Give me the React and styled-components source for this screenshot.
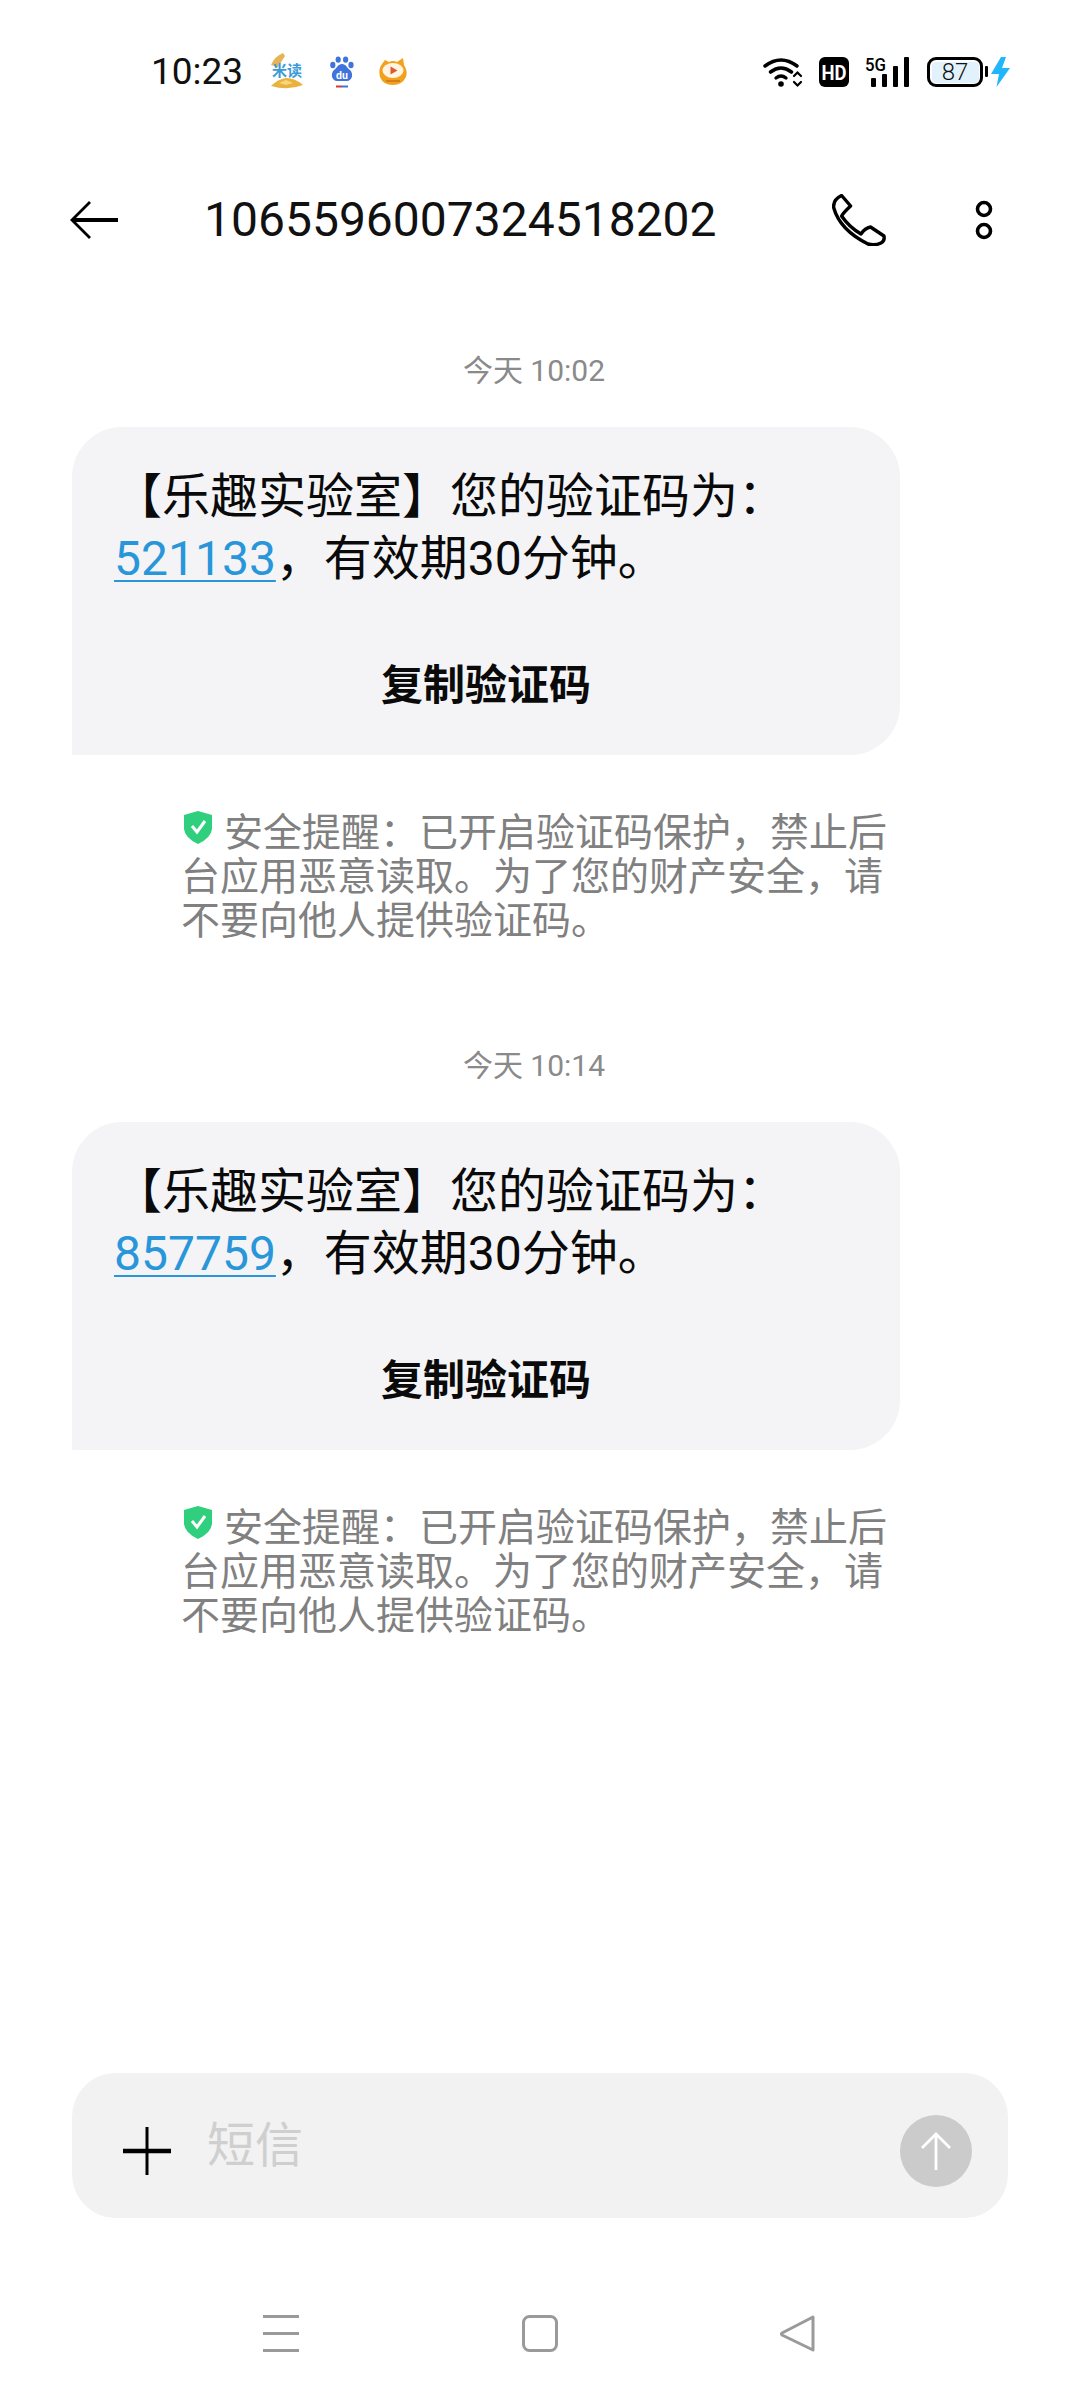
import React from "react";
import styled, { createGlobalStyle } from "styled-components";

const Global = createGlobalStyle`
  html, body { margin: 0; padding: 0; background: #fff; }
  * { box-sizing: border-box; }
`;
const FONT = `Roboto, "Noto Sans CJK SC", sans-serif`;

const Page = styled.div`
  width: 1080px; height: 2400px; display: flex; flex-direction: column;
  background: #fff; font-family: ${FONT}; color: #000; overflow: hidden;
`;
const StatusBar = styled.div`
  height: 144px; flex: none; display: flex; align-items: center; padding: 0 69px 0 151px;
`;
const Time = styled.span`font-size: 37px; line-height: 44px; color: #111; width: 117px;`;
const AppIcons = styled.div`display: flex; align-items: center; gap: 24px;`;
const StatusIcons = styled.div`margin-left: auto; display: flex; align-items: center; gap: 16px;`;
const BatteryWrap = styled.div`display: flex; align-items: center; gap: 8px;`;
const Battery = styled.div`
  width: 56px; height: 30px; border: 3.5px solid #000; border-radius: 9px; padding: 1.5px;
  display: flex; position: relative;
  &::after { content: ""; position: absolute; right: -8px; top: 6px; width: 3.5px; height: 11px; background: #000; border-radius: 1px; }
`;
const BatteryFill = styled.div`
  flex: 1; background: #e2f2fd; border-radius: 4px; font-size: 24px; line-height: 20px;
  text-align: center; color: #111; font-weight: 300;
`;
const Header = styled.div`
  height: 152px; flex: none; display: flex; align-items: center; padding-left: 70px;
`;
const Title = styled.h1`
  margin: 0 0 0 86px; font-size: 48px; line-height: 60px; font-weight: 400; color: #111; width: 628px;
`;
const HeaderDots = styled.svg`margin-left: 89px;`;
const Thread = styled.div`
  flex: 1; padding: 51px 72px 0; display: flex; flex-direction: column; gap: 99px;
`;
const Group = styled.div`display: flex; flex-direction: column;`;
const Stamp = styled.div`
  font-size: 30px; line-height: 48px; color: #8a8a8a; text-align: center; padding-right: 12px;
`;
const Bubble = styled.div`
  margin-top: 32px; width: 828px; height: 328px; background: #f4f4f6;
  border-radius: 50px 50px 50px 2px; padding: 39px 42px 0;
`;
const Body = styled.div`font-size: 48px; line-height: 62px; color: #0a0a0a;`;
const Code = styled.a`color: #2a96da; text-decoration: underline; text-decoration-thickness: 2px; text-underline-offset: 5px;`;
const Copy = styled.div`
  margin-top: 66px; font-size: 42px; line-height: 60px; font-weight: 700; text-align: center; color: #0a0a0a;
`;
const Notice = styled.div`
  margin: 56px 0 0 109px; width: 712px; font-size: 39px; line-height: 44px; color: #808080;
`;
const ShieldIcon = styled.svg`
  display: inline-block; width: 28px; height: 33px; margin: 0 12px 0 3px; vertical-align: 2px;
`;
const Composer = styled.div`
  margin: 1px 72px 0; height: 145px; flex: none; background: #f2f2f2; border-radius: 44px;
  display: flex; align-items: center; padding: 11px 36px 0 51px;
`;
const Placeholder = styled.span`
  margin-left: 36px; font-size: 48px; line-height: 60px; color: #cfcfcf; flex: 1; position: relative; top: -5px;
`;
const SendButton = styled.div`
  width: 72px; height: 72px; border-radius: 50%; background: #cbcbcb; display: flex; align-items: center; justify-content: center;
`;
const NavBar = styled.div`
  height: 182px; flex: none; padding-top: 97px; display: flex; align-items: flex-start;
`;
const NavSlot = styled.div`
  width: 36px; height: 37px; margin-left: ${(p) => p.$gap}px; display: flex;
`;
const GlyphSvg = styled.svg`overflow: visible; flex: none;`;

const MiduIcon = () => (
  <GlyphSvg width="38" height="38" viewBox="0 0 38 38">
    <path d="M3 12 Q7 3 15 0 L17 3 L10 14 Z" fill="#e6b455" />
    <text x="19" y="23" textAnchor="middle" fontSize="15" fontWeight="700" fill="#3c9ad8" fontFamily='"Noto Sans CJK SC", sans-serif'>米读</text>
    <path d="M3 33 Q10 26 18 25 Q27 25 35 32 Q20 38 3 33 Z" fill="#e9b13d" />
    <path d="M11 30 L18 27 L25 30 L18 32 Z" fill="#f6d77c" />
  </GlyphSvg>
);
const BaiduIcon = () => (
  <GlyphSvg width="24" height="32" viewBox="0 0 24 32">
    <g fill="#3f74dc">
      <ellipse cx="2.8" cy="9" rx="2.6" ry="3.2" />
      <ellipse cx="8.2" cy="3.6" rx="2.6" ry="3.2" />
      <ellipse cx="15.6" cy="3.6" rx="2.6" ry="3.2" />
      <ellipse cx="21" cy="9" rx="2.6" ry="3.2" />
      <path d="M12 8 C16 8 17 12 20 14 C24 18 22 25 17 25 C14 25 10 25 7 25 C2 25 0 18 4 14 C7 12 8 8 12 8 Z" />
    </g>
    <text x="12" y="23" textAnchor="middle" fontSize="10.5" fontWeight="700" fill="#fff" fontFamily="Roboto, sans-serif">du</text>
    <rect x="6" y="29.5" width="6" height="2" fill="#cf3b3b" />
    <rect x="12" y="29.5" width="6" height="2" fill="#3f74dc" />
  </GlyphSvg>
);
const TigerIcon = () => (
  <GlyphSvg width="30" height="28" viewBox="0 0 30 28">
    <path d="M4 6 L7 2 L11 4 Q15 2 19 4 L25 0 L26 7 Q30 13 28 19 Q24 27 15 27 Q5 27 2 19 Q0 11 4 6 Z" fill="#f2a11d" />
    <ellipse cx="15" cy="12.5" rx="10.5" ry="7.5" fill="#fff5e2" />
    <path d="M12.5 8.5 L19.5 12.5 L12.5 16.5 Z" fill="#dd5a2c" />
    <path d="M8 23 H22" stroke="#c9741a" strokeWidth="1.5" />
  </GlyphSvg>
);
const WifiIcon = () => (
  <GlyphSvg width="40" height="30" viewBox="0 0 40 30" fill="none" stroke="#000" strokeLinecap="round">
    <path d="M2 9 Q18 -3 34 9" strokeWidth="3.6" />
    <path d="M7.5 15 Q18 7 28.5 15" strokeWidth="3.6" />
    <path d="M13 21 Q18 17 23 21" strokeWidth="3.4" />
    <circle cx="18" cy="27" r="2.8" fill="#000" stroke="none" />
    <path d="M31 19 L34.5 15.5 L38 19" strokeWidth="2.2" />
    <path d="M31 25 L34.5 28.5 L38 25" strokeWidth="2.2" />
  </GlyphSvg>
);
const HdIcon = () => (
  <GlyphSvg width="30" height="30" viewBox="0 0 30 30">
    <rect width="30" height="30" rx="6" fill="#000" />
    <text x="15" y="23" textAnchor="middle" fontSize="21" fontWeight="700" fill="#fff" fontFamily="Roboto, sans-serif" textLength="25" lengthAdjust="spacingAndGlyphs">HD</text>
  </GlyphSvg>
);
const SignalIcon = () => (
  <GlyphSvg width="46" height="30" viewBox="0 0 46 30" fill="#000">
    <text x="0" y="14" fontSize="19" fontWeight="500" fontFamily="Roboto, sans-serif" textLength="21" lengthAdjust="spacingAndGlyphs">5G</text>
    <rect x="6" y="21" width="5" height="9" rx="1" />
    <rect x="17" y="17" width="5" height="13" rx="1" />
    <rect x="28" y="9" width="5" height="21" rx="1" />
    <rect x="39" y="0" width="5" height="30" rx="1" />
  </GlyphSvg>
);
const BoltIcon = () => (
  <GlyphSvg width="20" height="30" viewBox="0 0 20 30">
    <path d="M10 0 L0 17 H8 L5.5 30 L19 11 H11 L15 0 Z" fill="#1fb6fb" />
  </GlyphSvg>
);
const BackIcon = () => (
  <svg width="48" height="38" viewBox="0 0 48 38" fill="none" stroke="#000">
    <path d="M20 1 L2 19 L20 37" strokeWidth="2.8" />
    <path d="M3 19 H48" strokeWidth="4" />
  </svg>
);
const PhoneIcon = () => (
  <svg width="54" height="52" viewBox="0 0 54 52" fill="none" stroke="#000" strokeWidth="3.4" strokeLinejoin="round">
    <path d="M9.6 1.5 L18.6 12 Q12 18 9.6 22 Q17 33 29 40 Q33 34 38.5 33 L52 42 Q53 47 49 49 Q43 52 36 50 Q8 36 1.8 14 Q0.5 6 9.6 1.5 Z" />
  </svg>
);
const DotsIcon = () => (
  <HeaderDots width="18" height="40" viewBox="0 0 18 40" fill="none" stroke="#000" strokeWidth="3.6">
    <circle cx="9" cy="9" r="6.5" />
    <circle cx="9" cy="31" r="6.5" />
  </HeaderDots>
);
const ShieldGlyph = () => (
  <ShieldIcon viewBox="0 0 28 33">
    <path d="M14 0 L28 4 V18 Q27 27 14 33 Q1 27 0 18 V4 Z" fill="#2fcf7d" />
    <path d="M8 15 L13 21 L21 10" fill="none" stroke="#fff" strokeWidth="3" />
  </ShieldIcon>
);
const PlusIcon = () => (
  <svg width="48" height="48" viewBox="0 0 48 48" stroke="#000">
    <path d="M0 24 H48" strokeWidth="4.5" />
    <path d="M24 0 V48" strokeWidth="3" />
  </svg>
);
const ArrowUp = () => (
  <svg width="32" height="38" viewBox="0 0 32 38" fill="none" stroke="#fff">
    <path d="M2 16 L16 2 L30 16" strokeWidth="2.8" />
    <path d="M16 3 V38" strokeWidth="2.8" />
  </svg>
);
const MenuIcon = () => (
  <svg width="36" height="37" viewBox="0 0 36 37" fill="#9a9a9a">
    <rect y="0" width="36" height="3" />
    <rect y="17" width="36" height="3" />
    <rect y="34" width="36" height="3" />
  </svg>
);
const HomeIcon = () => (
  <svg width="36" height="37" viewBox="0 0 36 37" fill="none" stroke="#9a9a9a" strokeWidth="3">
    <rect x="1.5" y="1.5" width="33" height="34" rx="6" />
  </svg>
);
const BackNavIcon = () => (
  <svg width="36" height="37" viewBox="0 0 36 37" fill="none" stroke="#9a9a9a" strokeWidth="3" strokeLinejoin="round">
    <path d="M33 2 L2 18 Q1 19 2 20 L33 35 Z" />
  </svg>
);

const MESSAGES = [
  { time: "今天 10:02", code: "521133" },
  { time: "今天 10:14", code: "857759" },
];

export default function App() {
  return (
    <Page>
      <Global />
      <StatusBar>
        <Time>10:23</Time>
        <AppIcons>
          <MiduIcon />
          <BaiduIcon />
          <TigerIcon />
        </AppIcons>
        <StatusIcons>
          <WifiIcon />
          <HdIcon />
          <SignalIcon />
          <BatteryWrap>
            <Battery><BatteryFill>87</BatteryFill></Battery>
            <BoltIcon />
          </BatteryWrap>
        </StatusIcons>
      </StatusBar>
      <Header>
        <BackIcon />
        <Title>1065596007324518202</Title>
        <PhoneIcon />
        <DotsIcon />
      </Header>
      <Thread>
        {MESSAGES.map((m) => (
          <Group key={m.code}>
            <Stamp>{m.time}</Stamp>
            <Bubble>
              <Body>【乐趣实验室】您的验证码为：<Code>{m.code}</Code>，有效期30分钟。</Body>
              <Copy>复制验证码</Copy>
            </Bubble>
            <Notice>
              <ShieldGlyph />安全提醒：已开启验证码保护，禁止后台应用恶意读取。为了您的财产安全，请不要向他人提供验证码。
            </Notice>
          </Group>
        ))}
      </Thread>
      <Composer>
        <PlusIcon />
        <Placeholder>短信</Placeholder>
        <SendButton><ArrowUp /></SendButton>
      </Composer>
      <NavBar>
        <NavSlot $gap={263}><MenuIcon /></NavSlot>
        <NavSlot $gap={223}><HomeIcon /></NavSlot>
        <NavSlot $gap={222}><BackNavIcon /></NavSlot>
      </NavBar>
    </Page>
  );
}
